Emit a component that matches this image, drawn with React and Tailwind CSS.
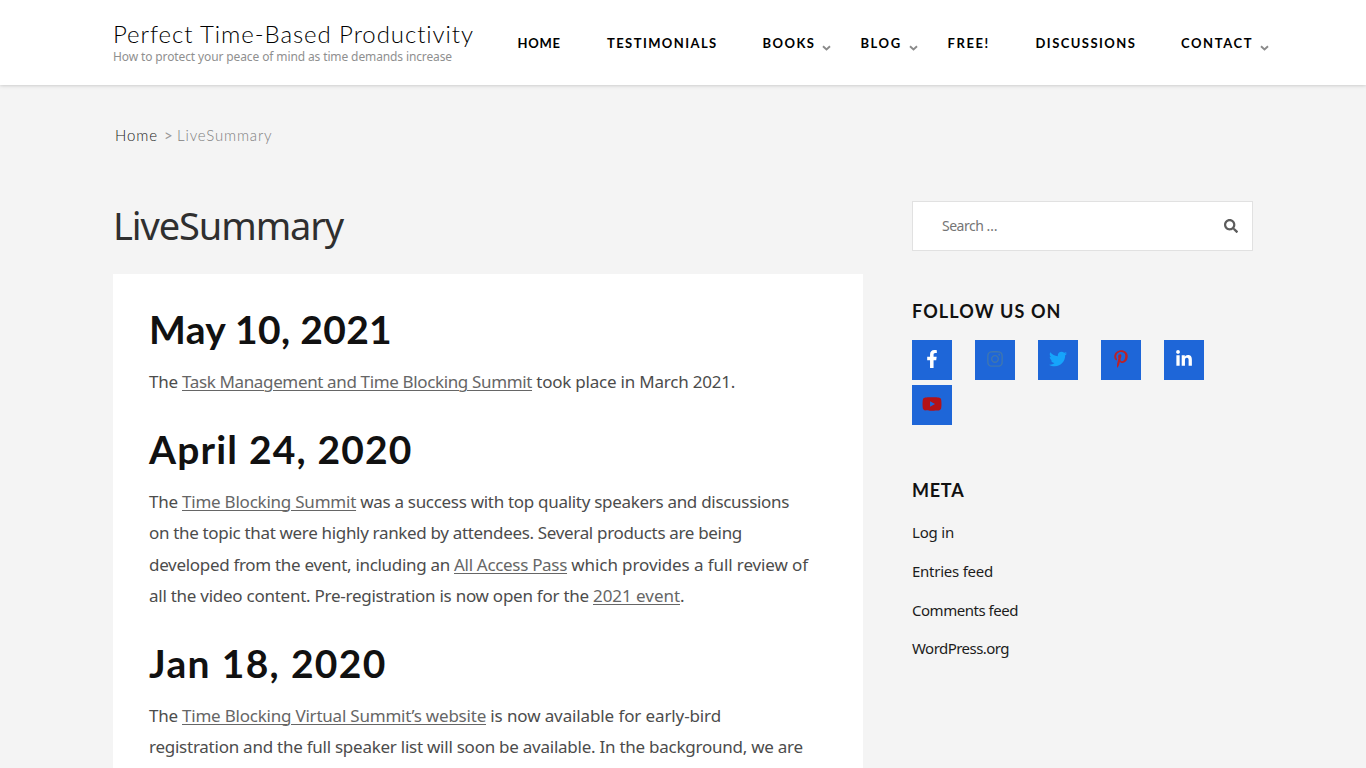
import React from 'react';
import {
  FaFacebookF,
  FaInstagram,
  FaTwitter,
  FaPinterestP,
  FaLinkedinIn,
  FaYoutube,
  FaSearch,
} from 'react-icons/fa';

const navItems = [
  { label: 'HOME', item: 'w-[89.5px]', text: 'tracking-[0.7px]' },
  { label: 'TESTIMONIALS', item: 'w-[155.5px]', text: 'tracking-[1.42px]' },
  { label: 'BOOKS', item: 'w-[98px]', text: 'tracking-[1.45px]', menu: true },
  { label: 'BLOG', item: 'w-[87px]', text: 'tracking-[1.55px]', menu: true },
  { label: 'FREE!', item: 'w-[88px]', text: 'tracking-[1.6px]' },
  { label: 'DISCUSSIONS', item: 'w-[145.5px]', text: 'tracking-[1.45px]' },
  { label: 'CONTACT', item: 'w-[92px]', text: 'tracking-[1.6px]', menu: true },
];

const socials = [
  { name: 'Facebook', Icon: FaFacebookF, style: 'text-white' },
  { name: 'Instagram', Icon: FaInstagram, style: 'text-[#3f76b0]' },
  { name: 'Twitter', Icon: FaTwitter, style: 'text-[#16a4fb]' },
  { name: 'Pinterest', Icon: FaPinterestP, style: 'text-[#bd2126]' },
  { name: 'LinkedIn', Icon: FaLinkedinIn, style: 'text-white' },
  { name: 'YouTube', Icon: FaYoutube, style: 'text-[20px] text-[#b31217]' },
];

const metaLinks = [
  { label: 'Log in', style: 'tracking-[-0.2px]' },
  { label: 'Entries feed', style: 'tracking-[-0.245px]' },
  { label: 'Comments feed', style: 'tracking-[-0.47px]' },
  { label: 'WordPress.org', style: 'tracking-[-0.54px]' },
];

const Chevron = () => (
  <svg className="ml-[7px] mt-[7px] h-[6px] w-[9px]" viewBox="0 0 9 6" fill="none">
    <path d="M1 1.2 4.5 4.4 8 1.2" stroke="#8a8a8a" strokeWidth="1.9" />
  </svg>
);

const TextLink = ({ className, children }) => (
  <a href="#" className={`text-[#666] underline decoration-1 underline-offset-2 ${className}`}>
    {children}
  </a>
);

const Line = ({ className = '', children }) => (
  <span className={`block whitespace-pre ${className}`}>{children}</span>
);

const Heading = ({ className, children }) => (
  <h2 className={`mb-[18px] whitespace-nowrap font-['Lato'] text-[39px] leading-[38px] font-bold text-[#111] ${className}`}>
    {children}
  </h2>
);

const Header = () => (
  <header className="h-[85px] bg-white shadow-[0_0_4px_rgba(0,0,0,0.25)]">
    <div className="mx-auto flex w-[1140px]">
      <div className="w-[404.5px] shrink-0 whitespace-nowrap pt-[19px]">
        <div className="mb-px font-['Lato'] text-[24px] leading-[29px] font-light tracking-[0.92px] text-black">
          Perfect Time-Based Productivity
        </div>
        <div className="text-[12px] leading-4 tracking-[-0.119px] text-[#8f8f8f]">
          How to protect your peace of mind as time demands increase
        </div>
      </div>
      <nav className="flex h-[88px] shrink-0 items-center font-['Lato'] text-[13px] font-bold text-black">
        {navItems.map(({ label, item, text, menu }) => (
          <a key={label} href="#" className={`flex shrink-0 items-center ${item}`}>
            <span className={text}>{label}</span>
            {menu && <Chevron />}
          </a>
        ))}
      </nav>
    </div>
  </header>
);

const Article = () => (
  <article className="h-[600px] bg-white p-9 text-[17px] leading-[31.5px] text-[#4c4c4c]">
    <Heading className="tracking-[0.34px]">May 10, 2021</Heading>
    <p className="mb-8">
      <Line>
        <span className="tracking-[-0.24px]">The </span>
        <TextLink className="tracking-[-0.36px]">Task Management and Time Blocking Summit</TextLink>
        <span className="tracking-[-0.218px]"> took place in March 2021.</span>
      </Line>
    </p>
    <Heading className="tracking-[1.18px]">April 24, 2020</Heading>
    <p className="mb-8">
      <Line>
        <span className="tracking-[-0.24px]">The </span>
        <TextLink className="tracking-[-0.23px]">Time Blocking Summit</TextLink>
        <span className="tracking-[-0.3px]"> was a success with top quality speakers and discussions</span>
      </Line>
      <Line className="tracking-[-0.328px]">
        on the topic that were highly ranked by attendees. Several products are being
      </Line>
      <Line>
        <span className="tracking-[-0.308px]">developed from the event, including an </span>
        <TextLink className="tracking-[-0.309px]">All Access Pass</TextLink>
        <span className="tracking-[-0.096px]"> which provides a full review of</span>
      </Line>
      <Line>
        <span className="tracking-[-0.258px]">all the video content. Pre-registration is now open for the </span>
        <TextLink className="tracking-[-0.043px]">2021 event</TextLink>.
      </Line>
    </p>
    <Heading className="tracking-[1.34px]">Jan 18, 2020</Heading>
    <p>
      <Line>
        <span className="tracking-[-0.24px]">The </span>
        <TextLink className="tracking-[-0.217px]">Time Blocking Virtual Summit’s website</TextLink>
        <span className="tracking-[-0.116px]"> is now available for early-bird</span>
      </Line>
      <Line className="tracking-[-0.25px]">
        registration and the full speaker list will soon be available. In the background, we are
      </Line>
    </p>
  </article>
);

const Sidebar = () => (
  <aside className="w-[341px] shrink-0">
    <form className="flex h-[50px] items-center justify-between border border-[#e1e1e1] bg-white pr-[14px] pb-px pl-[29px]">
      <span className="text-[14px] tracking-[-0.5px] text-[#757575]">Search …</span>
      <FaSearch className="size-[14px] text-[#5c5c5c]" />
    </form>

    <h3 className="mt-[48px] font-['Lato'] text-[18px] leading-6 font-bold tracking-[1.1px] text-[#111]">
      FOLLOW US ON
    </h3>
    <div className="mt-[17px] flex flex-wrap gap-x-[23px] gap-y-[5px] text-[18px]">
      {socials.map(({ name, Icon, style }) => (
        <a
          key={name}
          href="#"
          aria-label={name}
          className={`flex size-10 items-center justify-center bg-[#1e66d8] pb-[2px] ${style}`}
        >
          <Icon />
        </a>
      ))}
    </div>

    <h3 className="mt-[53px] font-['Lato'] text-[18px] leading-6 font-bold tracking-[0.75px] text-[#111]">
      META
    </h3>
    <ul className="mt-[11px] text-[15px] leading-[38.8px] text-[#1c1c1c]">
      {metaLinks.map(({ label, style }) => (
        <li key={label}>
          <a href="#" className={style}>
            {label}
          </a>
        </li>
      ))}
    </ul>
  </aside>
);

export default function App() {
  return (
    <div className="h-screen overflow-hidden bg-[#f4f4f4] font-['Noto_Sans',sans-serif]">
      <Header />
      <div className="mx-auto w-[1140px]">
        <div className="flex pt-[38px] pl-[2px] font-['Lato'] text-[15px] leading-6 text-[#999]">
          <a href="#" className="w-[49px] font-light tracking-[0.9px] text-[#222]">
            Home
          </a>
          <span className="w-[13px]">&gt;</span>
          <span className="font-light tracking-[0.85px] text-[#808080]">LiveSummary</span>
        </div>
        <div className="mt-[54px] flex justify-between">
          <main className="w-[750px]">
            <h1 className="mb-[24px] text-[38px] leading-[49px] tracking-[-1.1px] text-[#2f2f2f]">LiveSummary</h1>
            <Article />
          </main>
          <Sidebar />
        </div>
      </div>
    </div>
  );
}
